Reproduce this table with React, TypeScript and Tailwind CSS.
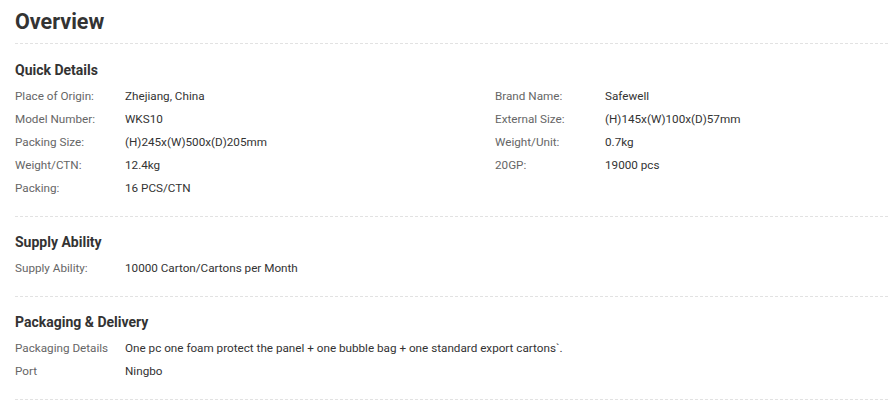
const quick: [string, string][] = [
  ["Place of Origin:", "Zhejiang, China"],
  ["Brand Name:", "Safewell"],
  ["Model Number:", "WKS10"],
  ["External Size:", "(H)145x(W)100x(D)57mm"],
  ["Packing Size:", "(H)245x(W)500x(D)205mm"],
  ["Weight/Unit:", "0.7kg"],
  ["Weight/CTN:", "12.4kg"],
  ["20GP:", "19000 pcs"],
  ["Packing:", "16 PCS/CTN"],
];

function Row({ label, value }: { label: string; value: string }) {
  return (
    <div className="flex h-[23px] items-center text-[11.7px]">
      <div className="w-[110px] shrink-0 text-[#666]">{label}</div>
      <div className="text-[#333]">{value}</div>
    </div>
  );
}

function Section({ title, first, children }: { title: string; first?: boolean; children: React.ReactNode }) {
  return (
    <div className={`border-b border-dashed border-[#e2e2e2] pb-[16px] ${first ? "pt-[16px]" : "pt-[15px]"}`}>
      <h3 className="mb-[5px] h-[20px] text-[14px] font-bold leading-[20px] text-[#333]">{title}</h3>
      {children}
    </div>
  );
}

export default function App() {
  return (
    <div
      className="min-h-[412px] bg-white pl-[15px] pr-px"
      style={{ fontFamily: "Roboto, 'Liberation Sans', sans-serif" }}
    >
      <div className="flex h-[44px] items-center border-b border-dashed border-[#e2e2e2]">
        <h2 className="pt-px text-[21.5px] font-bold text-[#333]">Overview</h2>
      </div>
      <Section title="Quick Details" first>
        <div className="grid grid-cols-[480px_1fr]">
          {quick.map(([l, v]) => (
            <Row key={l} label={l} value={v} />
          ))}
        </div>
      </Section>
      <Section title="Supply Ability">
        <Row label="Supply Ability:" value="10000 Carton/Cartons per Month" />
      </Section>
      <Section title="Packaging & Delivery">
        <Row
          label="Packaging Details"
          value="One pc one foam protect the panel + one bubble bag + one standard export cartons`."
        />
        <Row label="Port" value="Ningbo" />
      </Section>
    </div>
  );
}
